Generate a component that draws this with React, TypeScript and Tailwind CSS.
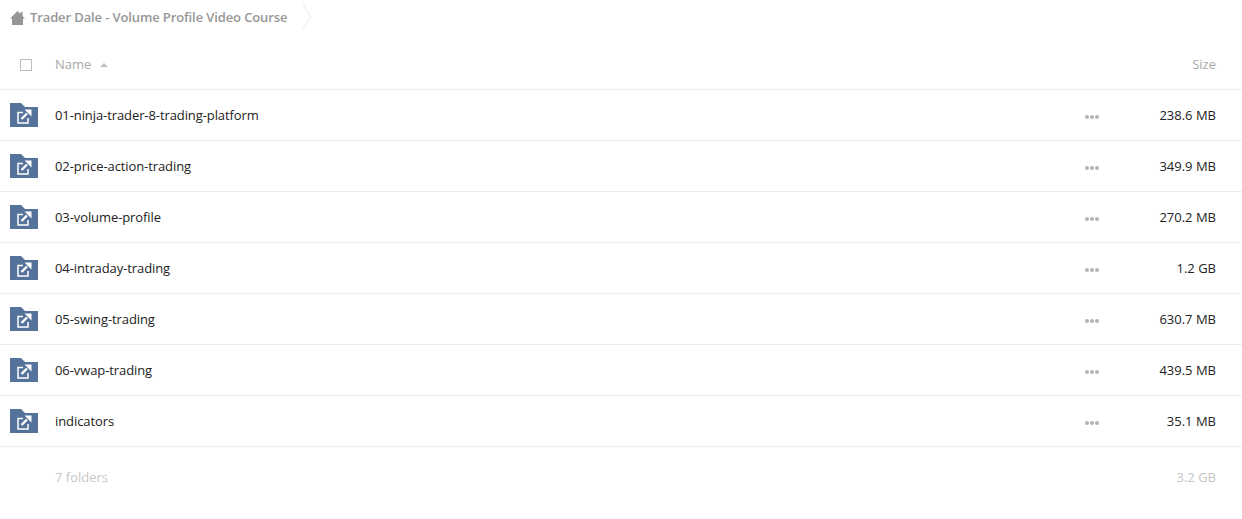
const rows = [
  { name: "01-ninja-trader-8-trading-platform", size: "238.6 MB" },
  { name: "02-price-action-trading", size: "349.9 MB" },
  { name: "03-volume-profile", size: "270.2 MB" },
  { name: "04-intraday-trading", size: "1.2 GB" },
  { name: "05-swing-trading", size: "630.7 MB" },
  { name: "06-vwap-trading", size: "439.5 MB" },
  { name: "indicators", size: "35.1 MB" },
];

function HomeIcon() {
  return (
    <svg width="15" height="14" viewBox="0 0 15 14" className="shrink-0">
      <path d="M0 7.5 L7.5 0 L10.5 3 V1 H12.5 V5 L15 7.5 H13 V14 H2 V7.5 Z" fill="#969696" />
    </svg>
  );
}

function Chevron() {
  return (
    <svg width="10" height="26" viewBox="0 0 10 26" className="shrink-0" fill="none">
      <path d="M1 0.5 L8.5 13 L1 25.5" stroke="#e9e9e9" strokeWidth="1" />
    </svg>
  );
}

// shared folder with the little "external link" mark on it
function SharedFolder() {
  return (
    <svg width="28" height="24" viewBox="0 0 28 24" className="shrink-0">
      <path d="M0 0 H11 L15 4 H28 V24 H0 Z" fill="#55729b" />
      <path d="M13 9.5 H8 V20 H18 V15" fill="none" stroke="#fff" strokeWidth="1.5" />
      <path d="M11.5 16 L17 10.5" fill="none" stroke="#fff" strokeWidth="2.4" />
      <path d="M14.5 6.5 H21.5 V13.5 Z" fill="#fff" />
    </svg>
  );
}

function Dots() {
  return (
    <div className="flex gap-[1px]">
      <span className="w-1 h-1 rounded-full bg-[#b4b4b4]" />
      <span className="w-1 h-1 rounded-full bg-[#b4b4b4]" />
      <span className="w-1 h-1 rounded-full bg-[#b4b4b4]" />
    </div>
  );
}

export default function App() {
  return (
    <div className="w-[1242px] h-[519px] bg-white overflow-hidden text-[13px] font-['Open_Sans',sans-serif] text-[#222]">
      <div className="h-[44px] flex items-start pl-[10px]">
        <div className="h-[36px] flex items-center gap-[5px]">
          <HomeIcon />
          <span className="font-semibold text-[#969696] tracking-[-0.12px]">Trader Dale - Volume Profile Video Course</span>
        </div>
        <div className="ml-[15px] pt-[4px]">
          <Chevron />
        </div>
      </div>

      <div className="h-[46px] flex items-center border-b border-[#ededed] pr-[26px] pb-[3px]">
        <div className="w-[55px] pl-[20px]">
          <div className="w-[12px] h-[12px] border border-[#bdbdbd]" />
        </div>
        <div className="flex-1 flex items-center gap-[9px] text-[#a8a8a8]">
          <span>Name</span>
          <span className="w-0 h-0 border-x-[4px] border-x-transparent border-b-[4px] border-b-[#bdbdbd]" />
        </div>
        <span className="text-[#a8a8a8]">Size</span>
      </div>

      {rows.map((row) => (
        <div key={row.name} className="h-[51px] flex items-center border-b border-[#ededed] pr-[26px]">
          <div className="w-[55px] pl-[10px]">
            <SharedFolder />
          </div>
          <span className="flex-1 pt-[2px] tracking-[-0.09px]">{row.name}</span>
          <div className="pt-[3px]">
            <Dots />
          </div>
          <span className="w-[117px] text-right pt-[2px]">{row.size}</span>
        </div>
      ))}

      <div className="h-[60px] flex items-center pl-[55px] pr-[26px] pt-[2px] text-[#c6c6c6]">
        <span className="flex-1">7 folders</span>
        <span>3.2 GB</span>
      </div>
    </div>
  );
}
